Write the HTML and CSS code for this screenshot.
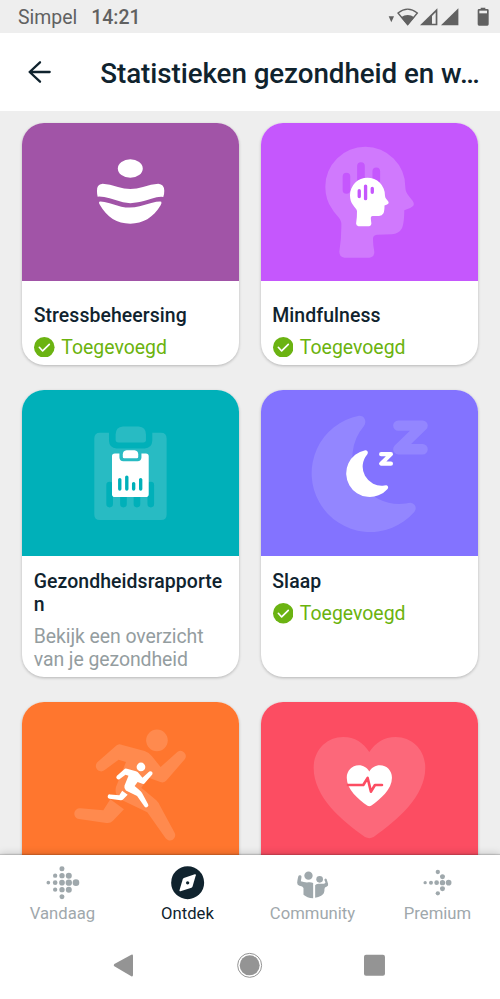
FILE: index.html
```html
<!DOCTYPE html>
<html lang="nl">
<head>
<meta charset="utf-8">
<meta name="viewport" content="width=device-width, initial-scale=1">
<title>Statistieken gezondheid en welzijn</title>
<link rel="stylesheet" href="styles.css">
</head>
<body>
<div class="screen">
  <div class="status-bar">
    <span class="carrier">Simpel</span>
    <span class="clock">14:21</span>
    <svg class="status-icons" viewBox="415 20 305 60">
      <path d="M417 48H433L425 66Z"/>
      <path d="M445 38Q474 15 503 38L474 73Z" fill="none" stroke="#616161" stroke-width="4"/>
      <path d="M454 51Q474 37 494 51L474 75Z"/>
      <path d="M511 75L563 24V75Z"/>
      <path class="signal-gap" d="M547 47L558 36V70H547Z"/>
      <path d="M574 75L626 24V75Z"/>
      <path d="M693 22H707V26H713Q717 26 717 30V72Q717 76 713 76H688Q684 76 684 72V30Q684 26 688 26H693Z"/>
      <path class="signal-gap" d="M689 31H712V39H689Z"/>
    </svg>
  </div>

  <header class="app-bar">
    <svg class="back" viewBox="80 180 75 72"><path d="M148 216H88M119 187L88 216L119 245"/></svg>
    <h1>Statistieken gezondheid en w…</h1>
  </header>

  <main class="content">
    <div class="grid">
      <article class="card row-one stress">
        <svg class="hero" viewBox="37 25 650 474">
          <g fill="#fff">
            <ellipse cx="362" cy="161.500" rx="37.500" ry="28"/>
            <path d="M262 230Q260 209 279 207Q300 208 325 217Q362 229 400 217Q425 208 446 207Q464 209 464 228Q464 240 461 247Q447 245 425 252Q400 260 385 263Q362 268 340 263L300 251Q280 245 264 246Q262 238 262 230Z"/>
            <path d="M269 261Q280 260 300 266L335 276Q362 282 390 275L425 265Q445 260 455 261Q457 264 453 272C430 310 400 327 362 327C322 327 292 308 271 271Q266 263 269 261Z"/>
          </g>
        </svg>
        <div class="body">
          <h2>Stressbeheersing</h2>
          <p class="added"><svg class="check" viewBox="0 0 62 62"><circle cx="31" cy="31" r="31"/><path d="M16 31L26 42L46 22"/></svg><span>Toegevoegd</span></p>
        </div>
      </article>

      <article class="card row-one mindful">
        <svg class="hero" viewBox="33 25 650 474">
          <defs>
            <g id="head">
              <path d="M226 216A120 120 0 0 1 466 216C467 237 476 242 488 258Q494 267 490 273Q485 279 463 287C463 310 461 330 456 341Q447 358 425 359L381 360Q369 361 369 372Q369 390 373 411Q374 427 358 429L284 429Q268 427 268 411Q275 370 274 325C272 310 258 303 247 284Q226 255 226 216Z"/>
              <path class="cutout" d="M289.500 186V226M333 154V240M379 170V197"/>
            </g>
          </defs>
          <use href="#head" class="ghost"/>
          <use href="#head" fill="#fff" transform="translate(201.300 147) scale(.437)"/>
        </svg>
        <div class="body">
          <h2>Mindfulness</h2>
          <p class="added"><svg class="check" viewBox="0 0 62 62"><circle cx="31" cy="31" r="31"/><path d="M16 31L26 42L46 22"/></svg><span>Toegevoegd</span></p>
        </div>
      </article>

      <article class="card row-two report">
        <svg class="hero" viewBox="37 29 650 499">
          <defs>
            <g id="clipboard">
              <path d="M271 157H298V181Q299 203 321 204H405Q427 203 428 181V157H454Q471 157 471 174V402Q471 419 454 419H271Q254 419 254 402V174Q254 157 271 157Z"/>
              <path d="M340 138H387Q409 140 409 162V178Q409 186 401 186H326Q318 186 318 178V162Q318 140 340 138Z"/>
              <path class="cutout" d="M300 314V371M341.500 299V371M382 338V371M423.500 314V371"/>
            </g>
          </defs>
          <use href="#clipboard" class="ghost"/>
          <use href="#clipboard" fill="#fff" transform="translate(178 140.500) scale(.508 .5)"/>
        </svg>
        <div class="body">
          <h2>Gezondheidsrapporten</h2>
          <p class="desc">Bekijk een overzicht van je gezondheid</p>
        </div>
      </article>

      <article class="card row-two sleep">
        <svg class="hero" viewBox="33 29 650 499">
          <defs>
            <g id="moon">
              <path d="M327 106A176 176 0 1 0 493 395C501 385 498 369 482 367Q476 367 468 369A141 141 0 0 1 341 138C352 124 344 104 327 106Z"/>
              <path class="zed" d="M445 135.500H518L445 206.500H518"/>
            </g>
          </defs>
          <use href="#moon" class="ghost"/>
          <use href="#moon" class="solid" transform="translate(214.200 166.500) scale(.403)"/>
        </svg>
        <div class="body">
          <h2>Slaap</h2>
          <p class="added"><svg class="check" viewBox="0 0 62 62"><circle cx="31" cy="31" r="31"/><path d="M16 31L26 42L46 22"/></svg><span>Toegevoegd</span></p>
        </div>
      </article>

      <article class="card row-three activity">
        <svg class="hero" viewBox="37 35 650 474">
          <defs>
            <g id="runner">
              <circle cx="442" cy="150" r="32.500"/>
              <path d="M329 162Q333 162 338 164L405 182Q418 186 427 198L453 230L504 184A16 16 0 0 1 526 206L471 270Q464 279 452 275L417 262L395 292L440 330Q447 337 450 344L495 427A16 16 0 0 1 468 444L413 366L330 326Q314 312 319 290L349 215L327 208L284 240A16 16 0 0 1 263 216L316 169Q322 163 329 162Z"/>
              <path d="M302 327L343 357L310 391Q302 400 290 398L208 386A16 16 0 0 1 212 354L281 360Z"/>
            </g>
          </defs>
          <use href="#runner" class="ghost"/>
          <use href="#runner" fill="#fff" transform="translate(215.900 169.500) scale(.403)"/>
        </svg>
      </article>

      <article class="card row-three heart">
        <svg class="hero" viewBox="33 35 650 474">
          <defs>
            <path id="heart" d="M358 185C340 158 315 140 280 140C228 140 191 182 191 232C191 320 275 390 345 440Q358 447 371 440C440 390 526 320 526 232C526 180 488 140 437 140C402 140 377 158 358 185Z"/>
          </defs>
          <use href="#heart" class="ghost"/>
          <use href="#heart" fill="#fff" transform="translate(213 168.300) scale(.405)"/>
          <path class="pulse" d="M294 284H340L353 263L363 304L375 284H396"/>
        </svg>
      </article>
    </div>
  </main>

  <nav class="tabs">
    <a class="tab">
      <svg viewBox="137.500 47 100 100">
        <circle cx="185.500" cy="55" r="7.500"/><circle cx="185.500" cy="76" r="8"/><circle cx="185.500" cy="97" r="8.500"/><circle cx="185.500" cy="118" r="8"/><circle cx="185.500" cy="139" r="7.500"/>
        <circle cx="165" cy="76" r="6.500"/><circle cx="165" cy="97" r="7"/><circle cx="165" cy="118" r="6.500"/>
        <circle cx="144.500" cy="97" r="5.500"/>
        <circle cx="206" cy="76" r="9"/><circle cx="206" cy="97" r="9.500"/><circle cx="206" cy="118" r="9"/>
        <circle cx="227.500" cy="97" r="10"/>
      </svg>
      <span>Vandaag</span>
    </a>
    <a class="tab active">
      <svg viewBox="512.500 47 100 100">
        <circle cx="562.500" cy="97" r="49.500"/>
        <path fill="#fff" d="M584 72Q588 71 587 75L577 109Q576 111 574 112L541 123Q537 124 538 120L548 86Q549 84 551 83Z"/>
        <circle cx="562.500" cy="97.500" r="5"/>
      </svg>
      <span>Ontdek</span>
    </a>
    <a class="tab">
      <svg viewBox="137.500 47 100 100">
        <circle cx="175" cy="76" r="12.500"/>
        <circle cx="208.500" cy="87" r="10"/>
        <path d="M144 79Q146 73 151 75Q155 76 154 81L152 93Q163 97 175 96Q183 95 189 98V144Q170 142 160 133V113Q158 107 148 106Q141 104 141 97Q142 87 144 79Z"/>
        <path d="M195 105Q197 100 205 100H222Q226 99 226 96L223 90Q222 86 225 85Q230 84 231 91L234 101Q235 108 229 109Q223 110 223 116Q224 131 213 136Q205 141 195 142Z"/>
      </svg>
      <span>Community</span>
    </a>
    <a class="tab">
      <svg viewBox="512.500 47 100 100">
        <circle cx="525" cy="97" r="5"/><circle cx="542.500" cy="97" r="6"/><circle cx="559.500" cy="97" r="7"/><circle cx="577" cy="97" r="8"/><circle cx="595.500" cy="97" r="8.500"/>
        <circle cx="563" cy="65" r="6.500"/><circle cx="577" cy="79.500" r="7.500"/><circle cx="577" cy="115" r="7.500"/><circle cx="563" cy="129" r="6.500"/>
      </svg>
      <span>Premium</span>
    </a>
  </nav>

  <div class="system-nav">
    <svg viewBox="337 307 76 80"><path d="M344 343L395 315Q400 313 400 318V376Q400 382 395 380L344 350Q340 347 344 343Z"/></svg>
    <svg viewBox="712 307 76 80"><circle cx="750" cy="347" r="30"/><circle cx="750" cy="347" r="36" fill="none" stroke="#949494" stroke-width="3"/></svg>
    <svg viewBox="337 307 76 80"><rect x="343" y="315.500" width="63" height="62.500" rx="6"/></svg>
  </div>
</div>
</body>
</html>
```
FILE: styles.css
```css
* {
  box-sizing: border-box;
}

body {
  margin: 0;
  font-family: Roboto, "Liberation Sans", sans-serif;
  color: #10232e;
  background: #fff;
}

h1, h2, p {
  margin: 0;
}

.screen {
  width: 500px;
  height: 999px;
  display: flex;
  flex-direction: column;
  overflow: hidden;
}

.status-bar {
  flex: none;
  height: 33px;
  padding: 2px 10.3px 0 18px;
  display: flex;
  align-items: center;
  background: #eee;
  color: #616161;
  font-size: 19.44px;
  line-height: 31px;
}

.clock {
  margin-left: 14px;
  font-weight: 500;
}

.status-icons {
  width: 101.7px;
  height: 20px;
  margin-left: auto;
  margin-top: -1.4px;
  fill: #616161;
}

.status-icons .signal-gap {
  fill: #eee;
}

.app-bar {
  flex: none;
  height: 78px;
  padding-left: 26.7px;
  display: flex;
  align-items: center;
  background: #fff;
}

.back {
  width: 25px;
  height: 24px;
  fill: none;
  stroke: #10232e;
  stroke-width: 7;
  stroke-linecap: round;
  stroke-linejoin: round;
}

.app-bar h1 {
  margin-left: 48.6px;
  padding-top: 2px;
  font-size: 27.78px;
  font-weight: 500;
  line-height: 33px;
  letter-spacing: -.07px;
  white-space: nowrap;
}

.content {
  flex: none;
  height: 743.6px;
  padding: 12.4px 22.4px 0;
  overflow: hidden;
  background: #eee;
}

.grid {
  display: grid;
  grid-template-columns: 216.6px 216.6px;
  grid-template-rows: 241.6px 287px 287px;
  column-gap: 22px;
  row-gap: 24.8px;
}

.card {
  overflow: hidden;
  border-radius: 22px;
  background: #fff;
  box-shadow: 0 1px 3px rgba(0, 0, 0, .24);
}

.hero {
  display: block;
  width: 100%;
  height: 158px;
  background: var(--tone);
}

.row-two .hero {
  height: 166.5px;
}

.ghost {
  fill: var(--ghost);
  stroke: var(--ghost);
  stroke-width: 0;
}

.cutout {
  fill: none;
  stroke: var(--tone);
  stroke-width: 23;
  stroke-linecap: round;
}

.report .cutout {
  stroke-width: 20;
}

.zed {
  fill: none;
  stroke-width: 31;
  stroke-linecap: round;
  stroke-linejoin: round;
}

.solid {
  fill: #fff;
  stroke: #fff;
  stroke-width: 0;
}

.pulse {
  fill: none;
  stroke: var(--tone);
  stroke-width: 8;
  stroke-linecap: round;
  stroke-linejoin: round;
}

.stress { --tone: #a154a7; }
.mindful { --tone: #c557fd; --ghost: #d079fd; }
.report { --tone: #00b0b9; --ghost: #28bbc3; }
.sleep { --tone: #8373ff; --ghost: #9386ff; }
.activity { --tone: #ff762e; --ghost: #ff8a4e; }
.heart { --tone: #fc4d62; --ghost: #fc687a; }

.body {
  padding: 23.4px 11.3px 0;
  font-size: 19.44px;
  line-height: 22.8px;
}

.row-two .body {
  padding-top: 14.8px;
}

.body h2 {
  font-size: inherit;
  font-weight: 500;
  letter-spacing: .07px;
  overflow-wrap: anywhere;
}

.added {
  margin-top: 8.2px;
  display: flex;
  align-items: center;
  color: #6bb30e;
}

.added span {
  padding-top: 1px;
  margin-bottom: -1px;
}

.check {
  width: 20.6px;
  height: 20.6px;
  margin-left: .4px;
  margin-right: 6.6px;
  fill: #6bb312;
}

.check path {
  fill: none;
  stroke: #fff;
  stroke-width: 5;
  stroke-linecap: round;
  stroke-linejoin: round;
}

.desc {
  margin-top: 9.4px;
  color: #949d9f;
  letter-spacing: -.07px;
}

.tabs {
  flex: none;
  position: relative;
  height: 77.4px;
  display: grid;
  grid-template-columns: repeat(4, 1fr);
  background: #fff;
  box-shadow: 0 -1px 8px rgba(0, 0, 0, .18), 0 -1px 1px rgba(0, 0, 0, .14);
}

.tab {
  padding-top: 11px;
  display: flex;
  flex-direction: column;
  align-items: center;
  color: #9fa8ac;
  fill: #9fa8ac;
  font-size: 16.67px;
  line-height: 20px;
}

.tab svg {
  width: 33.3px;
  height: 33.3px;
  margin-bottom: 5.2px;
  overflow: visible;
}

.tab.active {
  color: #10232e;
  fill: #10232e;
}

.system-nav {
  flex: 1;
  position: relative;
  padding: 20.4px 112.4px 0;
  display: flex;
  justify-content: space-between;
  background: #fff;
  fill: #949494;
}

.system-nav svg {
  width: 25.3px;
  height: 26.7px;
  overflow: visible;
}
```
